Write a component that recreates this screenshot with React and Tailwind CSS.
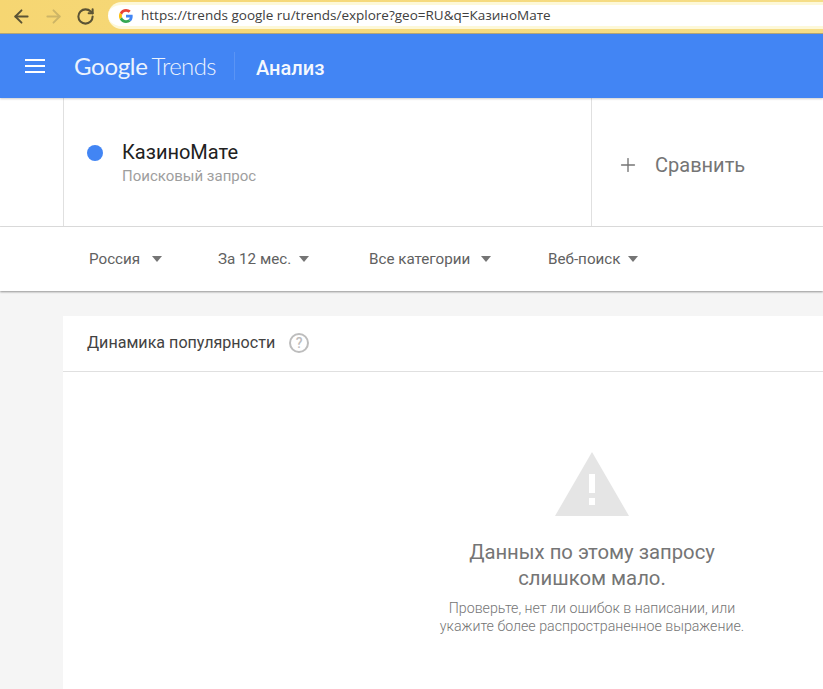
import React from "react";
import { ArrowLeft, ArrowRight, RotateCw, Plus } from "lucide-react";

const GoogleG = () => (
  <svg width="14" height="14" viewBox="0 0 48 48">
    <path fill="#EA4335" d="M24 9.5c3.5 0 6.700 1.200 9.200 3.600l6.900-6.900C35.900 2.400 30.500 0 24 0 14.600 0 6.500 5.400 2.600 13.300l8 6.200C12.500 13.700 17.800 9.500 24 9.500z" />
    <path fill="#4285F4" d="M46.900 24.500c0-1.600-.1-3.100-.4-4.500H24v9h12.900c-.6 3-2.200 5.500-4.700 7.200l7.700 6c4.500-4.200 7-10.300 7-17.700z" />
    <path fill="#FBBC05" d="M10.500 28.700c-.5-1.500-.8-3-.8-4.700s.3-3.200.8-4.700l-8-6.200C.9 16.300 0 20 0 24s.9 7.700 2.600 10.900l7.900-6.200z" />
    <path fill="#34A853" d="M24 48c6.500 0 11.900-2.100 15.900-5.800l-7.700-6c-2.100 1.400-4.900 2.300-8.200 2.300-6.200 0-11.500-4.200-13.400-9.800l-8 6.200C6.500 42.600 14.600 48 24 48z" />
  </svg>
);

const Caret = () => <span className="w-0 h-0 border-l-[5.5px] border-r-[5.5px] border-t-[6px] border-l-transparent border-r-transparent border-t-[#757575]" />;

const filters = [
  { label: "Россия", width: "w-[129px]", gap: "gap-[12px]" },
  { label: "За 12 мес.", width: "w-[151px]", gap: "gap-[8px]" },
  { label: "Все категории", width: "w-[179px]", gap: "gap-[11px]" },
  { label: "Веб-поиск", width: "w-[120px]", gap: "gap-[8px]" },
];

export default function App() {
  return (
    <div className="h-[689px] overflow-hidden bg-[#f5f5f5] font-['Roboto',sans-serif]">
      {/* browser toolbar */}
      <div className="h-[34px] flex items-center bg-gradient-to-r from-[#f6d672] to-[#f5dd87] border-b border-[#b5a678]">
        <div className="w-[108px] shrink-0 flex items-center pl-[5px]">
          <span className="w-[32px] flex justify-center"><ArrowLeft size={21} strokeWidth={2.2} className="text-[#5b5334]" /></span>
          <span className="w-[32px] flex justify-center"><ArrowRight size={21} strokeWidth={2.2} className="text-[#cdb566]" /></span>
          <span className="w-[32px] flex justify-center"><RotateCw size={19} strokeWidth={2.6} className="text-[#5b5334]" /></span>
        </div>
        <div className="flex-1 h-[27px] mb-[2px] flex items-center pl-[11px] rounded-l-full bg-white border-y-[3px] border-[#fdf8d8] font-['Open_Sans',sans-serif] text-[13.500px] text-[#404040]">
          <GoogleG />
          <span className="ml-[8px] whitespace-nowrap">https://trends google ru/trends/explore?geo=RU&amp;q=КазиноМате</span>
        </div>
      </div>

      {/* blue app bar */}
      <div className="relative h-[64px] flex items-center bg-[#4285f4] text-white shadow-[0_1px_2px_rgba(0,0,0,0.2)]">
        <div className="ml-[25px] w-[20px] flex flex-col gap-[4px]">
          <span className="h-[2px] bg-white" />
          <span className="h-[2px] bg-white" />
          <span className="h-[2px] bg-white" />
        </div>
        <div className="ml-[29px] w-[160px] whitespace-nowrap font-['Lato',sans-serif] text-[24px] tracking-[-0.4px] opacity-90">
          <span className="tracking-[-0.3px]">Google</span>
          <span className="ml-[4px] font-light tracking-[-0.6px]">Trends</span>
        </div>
        <div className="h-[28px] border-l border-[#5a94f5]" />
        <div className="ml-[21px] mt-[3px] text-[20px] font-medium opacity-95">Анализ</div>
      </div>

      {/* search term row */}
      <div className="h-[129px] flex bg-white border-b border-[#e0e0e0]">
        <div className="w-[64px] border-r border-[#e0e0e0]" />
        <div className="w-[528px] flex items-start pt-[41px] border-r border-[#e0e0e0]">
          <span className="ml-[23px] mt-[6px] w-[16px] h-[16px] rounded-full bg-[#4285f4]" />
          <div className="ml-[19px]">
            <div className="text-[20px] leading-[26px] text-[#212121]">КазиноМате</div>
            <div className="mt-[1px] text-[15px] leading-[20px] text-[#9e9e9e]">Поисковый запрос</div>
          </div>
        </div>
        <div className="flex items-center pt-[6px]">
          <Plus size={22} strokeWidth={1.500} className="ml-[25px] text-[#757575]" />
          <span className="ml-[16px] text-[20px] text-[#757575]">Сравнить</span>
        </div>
      </div>

      {/* filters */}
      <div className="relative h-[64px] flex items-center pl-[89px] bg-white shadow-[0_1px_2px_rgba(0,0,0,0.4)]">
        {filters.map((f) => (
          <div key={f.label} className={`${f.width} flex items-center ${f.gap} text-[15.200px] text-[#616161]`}>
            <span className="whitespace-nowrap">{f.label}</span>
            <Caret />
          </div>
        ))}
      </div>

      {/* interest card */}
      <div className="ml-[63px] mt-[25px] h-[373px] bg-white">
        <div className="h-[56px] flex items-center pl-[24px] pb-[1px] border-b border-[#e0e0e0]">
          <span className="text-[16.100px] text-[#424242]">Динамика популярности</span>
          <span className="ml-[14px] w-[20px] h-[20px] flex items-center justify-center rounded-full border-2 border-[#bdbdbd] text-[14px] font-medium text-[#bdbdbd]">?</span>
        </div>
        <div className="flex flex-col items-center pl-[298px]">
          <svg width="74" height="64" viewBox="0 0 74 64" className="mt-[80px]">
            <path fill="#e5e5e5" fillRule="evenodd" d="M37 0 74 64H0ZM34 22v19h6V22ZM34 46v7h6v-7Z" />
          </svg>
          <div className="mt-[23px] text-center text-[20.300px] leading-[26px] text-[#757575] whitespace-nowrap">
            Данных по этому запросу
            <br />
            слишком мало.
          </div>
          <div className="mt-[8px] text-center text-[14.200px] leading-[18px] font-light text-[#757575] whitespace-nowrap">
            Проверьте, нет ли ошибок в написании, или
            <br />
            укажите более распространенное выражение.
          </div>
        </div>
      </div>
    </div>
  );
}
